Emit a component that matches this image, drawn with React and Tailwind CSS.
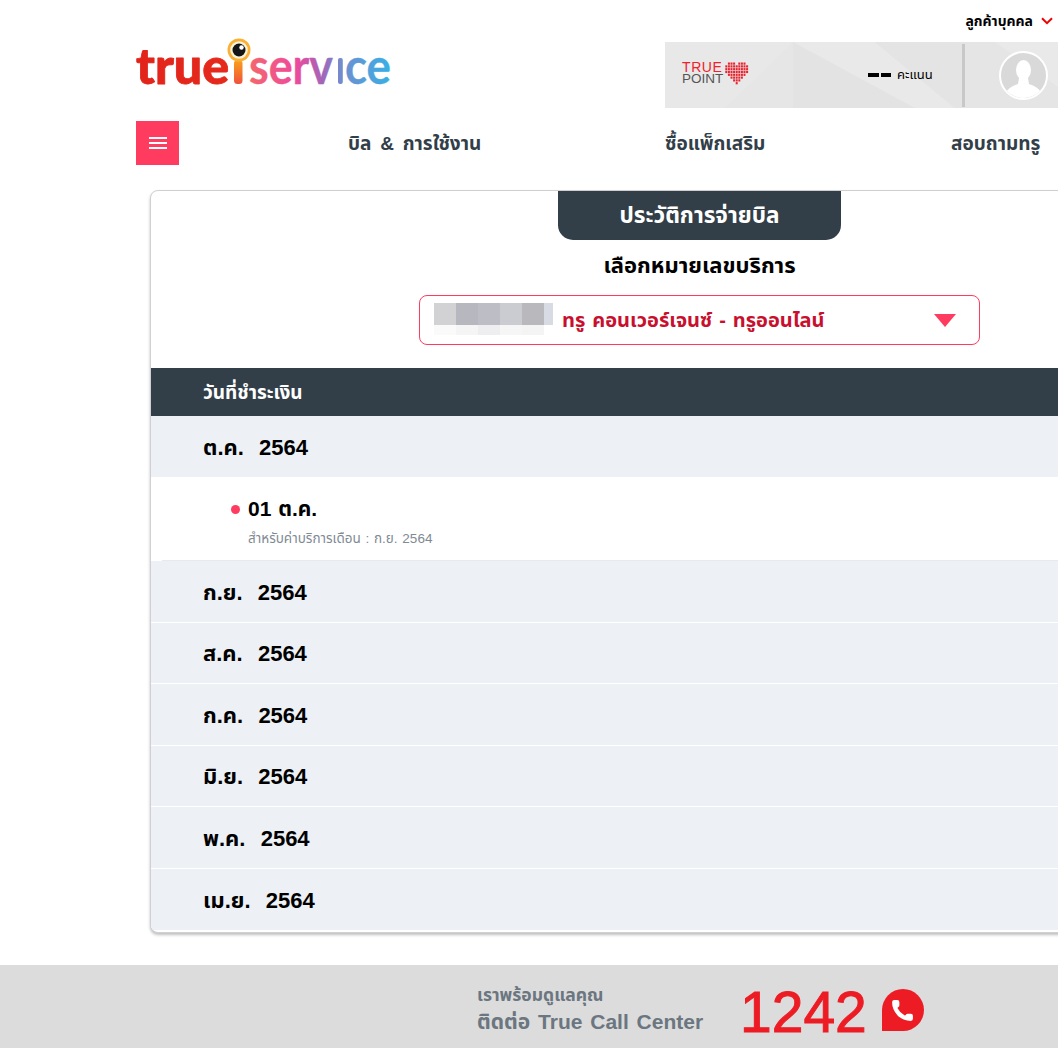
import React from "react";
import { Phone } from "lucide-react";

const FONT = "font-['Liberation_Sans','Noto_Sans','Noto_Sans_Thai','DejaVu_Sans',sans-serif]";

function Logo() {
  const common = {
    fill: "url(#lg)",
    stroke: "url(#lg)",
    fontFamily: "Lato, 'Liberation Sans', sans-serif",
    lengthAdjust: "spacingAndGlyphs",
    strokeLinejoin: "round",
  };
  return (
    <svg width="258" height="52" viewBox="0 0 258 52" className="block overflow-visible">
      <defs>
        <linearGradient id="lg" x1="0" x2="258" y1="0" y2="0" gradientUnits="userSpaceOnUse">
          <stop offset="0" stopColor="#e2231a" />
          <stop offset="0.36" stopColor="#e52a1c" />
          <stop offset="0.43" stopColor="#f4686a" />
          <stop offset="0.62" stopColor="#ee4a9c" />
          <stop offset="0.72" stopColor="#a564b8" />
          <stop offset="0.8" stopColor="#6f8fd0" />
          <stop offset="1" stopColor="#35b1e6" />
        </linearGradient>
        <linearGradient id="stem" x1="0" x2="0" y1="22" y2="46" gradientUnits="userSpaceOnUse">
          <stop offset="0" stopColor="#f9a11b" />
          <stop offset="1" stopColor="#f0513c" />
        </linearGradient>
      </defs>
      <text x="0" y="46" fontWeight="900" fontSize="49" strokeWidth="0.8" textLength="93" {...common}>true</text>
      <rect x="98" y="22" width="8.5" height="24" rx="3.5" fill="url(#stem)" />
      <circle cx="103" cy="12" r="11.5" fill="#fbb034" />
      <circle cx="103" cy="12" r="8.8" fill="#fff3d8" />
      <circle cx="103" cy="12" r="6.5" fill="#161616" />
      <circle cx="105.5" cy="9.5" r="2.2" fill="#fff" />
      <text x="113" y="46" fontWeight="700" fontSize="49" strokeWidth="0.3" textLength="84" {...common}>serv</text>
      <rect x="202" y="20" width="4.8" height="26" rx="2" fill="url(#lg)" />
      <text x="209" y="46" fontWeight="700" fontSize="49" strokeWidth="0.3" textLength="46" {...common}>ce</text>
    </svg>
  );
}

function Heart() {
  const rows = [
    [1, 2, 3, 5, 6, 7],
    [0, 1, 2, 3, 4, 5, 6, 7, 8],
    [0, 1, 2, 3, 4, 5, 6, 7, 8],
    [0, 1, 2, 3, 4, 5, 6, 7, 8],
    [1, 2, 3, 4, 5, 6, 7],
    [2, 3, 4, 5, 6],
    [3, 4, 5],
    [4],
  ];
  return (
    <svg width="24" height="23" viewBox="0 0 24 23" className="block">
      {rows.map((r, y) =>
        r.map((x) => <rect key={`${x}-${y}`} x={x * 2.6 + 0.3} y={y * 2.8 + 0.5} width="2" height="2.2" fill="#e8232e" />)
      )}
    </svg>
  );
}

function BannerBg() {
  return (
    <svg className="absolute inset-0" width="393" height="66" viewBox="0 0 393 66" aria-hidden="true">
      <polygon points="0,0 128,0 60,66 0,66" fill="#e8e8e8" />
      <polygon points="128,0 128,66 250,66" fill="#e3e3e3" />
      <polygon points="128,0 210,0 290,66 250,66" fill="#e9e9e9" />
      <polygon points="210,0 300,0 300,66 290,66" fill="#e4e4e4" />
      <polygon points="300,0 393,0 393,66 300,66" fill="#e5e5e5" />
      <polygon points="330,0 393,45 393,0" fill="#e9e9e9" />
    </svg>
  );
}

function MonthRow({ label, last }) {
  return (
    <div className={`h-[61.5px] bg-[#edf1f5] pl-[52px] pt-[2px] flex items-center font-bold text-[22px] text-black whitespace-pre [word-spacing:1.5px] ${last ? "" : "border-b border-white"}`}>
      {label}
    </div>
  );
}

export default function App() {
  return (
    <div className={`w-[1058px] h-[1048px] overflow-hidden bg-white flex flex-col ${FONT}`}>
      <div className="h-[42px] flex items-start justify-end pr-[5px] pt-[11px]">
        <span className="text-[14px] leading-[20px] font-bold text-black">ลูกค้าบุคคล</span>
        <svg width="12" height="8" viewBox="0 0 12 8" className="ml-[8px] mt-[6px]" fill="none" stroke="#ee0000" strokeWidth="2">
          <path d="M1 1.2 L6 6.2 L11 1.2" />
        </svg>
      </div>

      <div className="h-[66px] flex pl-[136px]">
        <div className="w-[529px] -mt-[4px]">
          <Logo />
        </div>
        <div className="relative w-[393px] h-[66px] bg-[#e6e6e6] overflow-hidden flex items-center shrink-0">
          <BannerBg />
          <div className="relative ml-[17px] w-[43px] leading-none -mt-[4px]">
            <div className="text-[14px] leading-[12px] text-[#f0212b] tracking-[0.6px]">TRUE</div>
            <div className="text-[13.5px] leading-[12px] text-[#555]">POINT</div>
          </div>
          <div className="relative -mt-[4px]">
            <Heart />
          </div>
          <div className="relative ml-[119px] flex items-center gap-[2px]">
            <span className="w-[11px] h-[4px] bg-black" />
            <span className="w-[10px] h-[4px] bg-black" />
          </div>
          <span className="relative ml-[6px] text-[13px] text-black">คะแนน</span>
          <div className="relative ml-[29px] w-[3px] h-[63px] bg-[#c8c8c8]" />
          <div className="relative ml-[34px] w-[49px] h-[49px] rounded-full border-2 border-white bg-[#d9d9d9] flex items-center justify-center overflow-hidden shrink-0">
            <svg width="45" height="45" viewBox="0 0 45 45" fill="#fff">
              <ellipse cx="22.5" cy="17" rx="7.5" ry="10" />
              <path d="M18 25 L27 25 L28 31 Q38 34 41 41 L41 45 L4 45 L4 41 Q7 34 17 31 Z" />
            </svg>
          </div>
        </div>
      </div>

      <div className="h-[82px] pl-[136px] pt-[13px] flex items-start shrink-0">
        <button className="w-[43px] h-[44px] bg-[#ff3b5f] flex flex-col items-center justify-center gap-[3px] shrink-0">
          <span className="w-[18px] h-[2px] bg-white" />
          <span className="w-[18px] h-[2px] bg-white" />
          <span className="w-[18px] h-[2px] bg-white" />
        </button>
        <nav className="flex items-center h-[44px] pt-[2px] ml-[169px] text-[19px] font-bold text-[#323e48] whitespace-pre shrink-0 [word-spacing:3.5px]">
          <span className="w-[317px]">บิล &amp; การใช้งาน</span>
          <span className="w-[286px]">ซื้อแพ็กเสริม</span>
          <span>สอบถามทรู</span>
        </nav>
      </div>

      <div className="pl-[150px] h-[775px] shrink-0">
        <div className="w-[1099px] h-[743px] border border-[#d0d0d0] rounded-[8px] bg-white overflow-hidden shadow-[0_2px_3px_rgba(0,0,0,0.25)] flex flex-col">
          <div className="w-[283px] h-[49px] mx-auto bg-[#323e48] rounded-b-[15px] flex items-center justify-center text-white text-[22.5px] font-bold shrink-0">
            ประวัติการจ่ายบิล
          </div>
          <div className="h-[51px] flex items-center justify-center text-[22px] font-bold text-black shrink-0">
            เลือกหมายเลขบริการ
          </div>
          <div className="w-[561px] h-[50px] mt-[4px] mx-auto border border-[#ff3b5f] rounded-[8px] flex items-center pl-[14px] pr-[23px] shrink-0">
            <div className="w-[119px] h-[32px] flex flex-col mb-[2px] shrink-0">
              <div className="flex h-[22px]">
                <div className="w-[22px] bg-[#d2d2d5]" />
                <div className="w-[22px] bg-[#b7b7bf]" />
                <div className="w-[22px] bg-[#bdbdc6]" />
                <div className="w-[22px] bg-[#cbcbd2]" />
                <div className="w-[22px] bg-[#b8b8bd]" />
                <div className="w-[9px] bg-[#d8dbe4]" />
              </div>
              <div className="flex h-[10px]">
                <div className="w-[22px] bg-[#fafafa]" />
                <div className="w-[22px] bg-[#f5f5f6]" />
                <div className="w-[22px] bg-[#eeeef0]" />
                <div className="w-[22px] bg-[#f6f6f7]" />
                <div className="w-[22px] bg-[#f4f4f5]" />
              </div>
            </div>
            <span className="ml-[9px] text-[20px] font-bold text-[#c8102e] whitespace-pre flex-1 [word-spacing:1.5px]">ทรู คอนเวอร์เจนซ์ - ทรูออนไลน์</span>
            <svg width="22" height="13" viewBox="0 0 22 13" fill="#ff3b5f"><polygon points="0,0 22,0 11,13" /></svg>
          </div>
          <div className="h-[48px] mt-[23px] bg-[#323e48] pl-[52px] pt-[2px] flex items-center text-white text-[19px] font-bold shrink-0">
            วันที่ชำระเงิน
          </div>
          <div className="h-[61px] bg-[#edf1f5] pl-[52px] pt-[2px] flex items-center font-bold text-[22px] text-black whitespace-pre shrink-0 [word-spacing:1.5px]">ต.ค.  2564</div>
          <div className="h-[84px] bg-white pl-[80px] pt-[17px] shrink-0 relative">
            <div className="flex items-center h-[30px]">
              <span className="w-[9px] h-[9px] rounded-full bg-[#ff3b5f] mr-[8px]" />
              <span className="text-[21px] font-bold text-black whitespace-pre [word-spacing:1px]">01 ต.ค.</span>
            </div>
            <div className="mt-[5px] ml-[17px] text-[13.5px] leading-[20px] text-[#7f8a94] [word-spacing:1px]">สำหรับค่าบริการเดือน : ก.ย. 2564</div>
            <div className="absolute left-[11px] right-0 bottom-0 h-px bg-[#e6e9ed]" />
          </div>
          <MonthRow label="ก.ย.  2564" />
          <MonthRow label="ส.ค.  2564" />
          <MonthRow label="ก.ค.  2564" />
          <MonthRow label="มิ.ย.  2564" />
          <MonthRow label="พ.ค.  2564" />
          <MonthRow label="เม.ย.  2564" last />
        </div>
      </div>

      <div className="h-[83px] bg-[#dcdcdc] flex pl-[477px] items-center shrink-0">
        <div className="w-[263px] shrink-0 mt-[4px]">
          <div className="text-[17.5px] leading-[26px] font-bold text-[#6b7680]">เราพร้อมดูแลคุณ</div>
          <div className="text-[21px] leading-[28px] font-bold text-[#6b7680] whitespace-pre [word-spacing:2px]">ติดต่อ True Call Center</div>
        </div>
        <span className="text-[57px] leading-none text-[#ed1c24] mt-[11px] [-webkit-text-stroke:1px_#ed1c24]">1242</span>
        <div className="ml-[15px] mt-[7px] w-[42px] h-[42px] bg-[#ed1c24] rounded-full rounded-bl-none flex items-center justify-center">
          <Phone size={25} color="#ed1c24" fill="#fff" strokeWidth={0} />
        </div>
      </div>
    </div>
  );
}
